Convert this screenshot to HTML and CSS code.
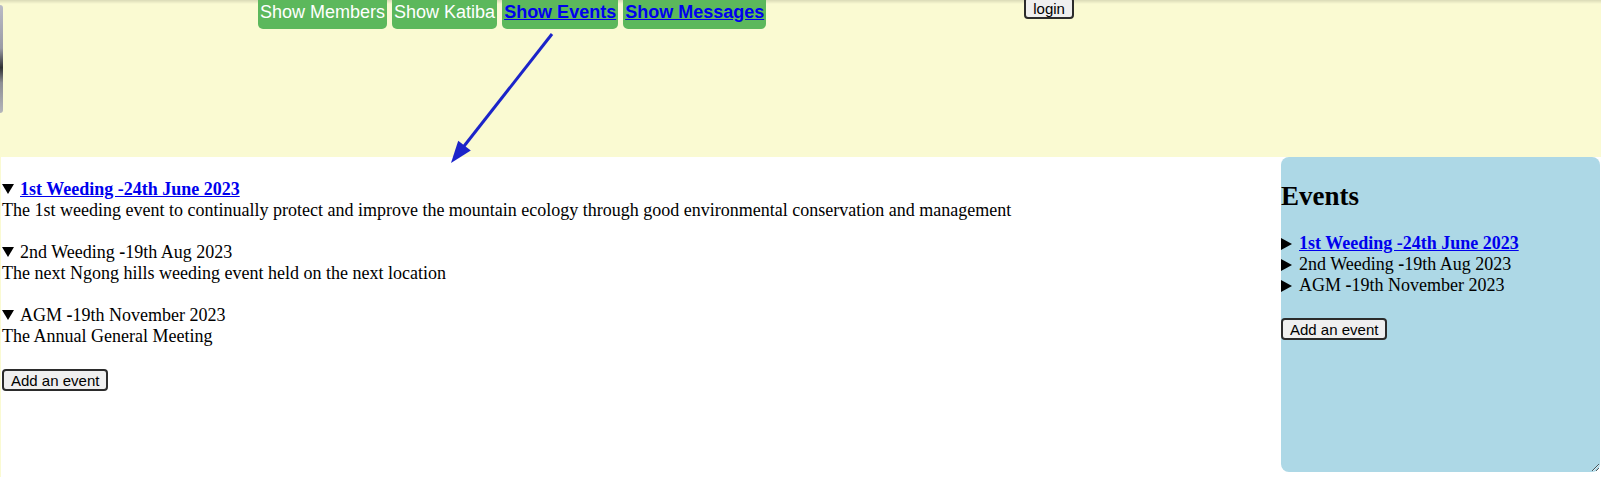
FILE: index.html
```html
<!DOCTYPE html>
<html lang="en">
<head>
<meta charset="utf-8">
<title>Events</title>
<link rel="stylesheet" href="styles.css">
</head>
<body>
<div class="page">
  <header class="topbar">
    <div class="logo-edge"></div>
    <nav class="tabs">
      <span class="tab">Show Members</span>
      <span class="tab">Show Katiba</span>
      <a class="tab tab-link" href="#">Show Events</a>
      <a class="tab tab-link" href="#">Show Messages</a>
    </nav>
    <button class="btn login">login</button>
  </header>

  <main class="content">
    <section class="event-list">
      <details class="event" open>
        <summary><a href="#" class="event-link">1st Weeding -24th June 2023</a></summary>
        <p class="event-desc">The 1st weeding event to continually protect and improve the mountain ecology through good environmental conservation and management</p>
      </details>
      <details class="event" open>
        <summary>2nd Weeding <b>-</b>19th Aug 2023</summary>
        <p class="event-desc">The next Ngong hills weeding event held on the next location</p>
      </details>
      <details class="event" open>
        <summary>AGM <b>-</b>19th November 2023</summary>
        <p class="event-desc">The Annual General Meeting</p>
      </details>
      <button class="btn add-btn">Add an event</button>
    </section>

    <aside class="side-panel">
      <h2 class="side-title">Events</h2>
      <details class="side-event">
        <summary><a href="#" class="event-link">1st Weeding -24th June 2023</a></summary>
      </details>
      <details class="side-event">
        <summary>2nd Weeding <b>-</b>19th Aug 2023</summary>
      </details>
      <details class="side-event">
        <summary>AGM <b>-</b>19th November 2023</summary>
      </details>
      <button class="btn side-add">Add an event</button>
    </aside>
  </main>

  <svg class="arrow" width="140" height="150" viewBox="0 0 140 150">
    <line x1="112" y1="4" x2="21" y2="120" stroke="#1b24c9" stroke-width="3"/>
    <polygon points="11,133 18.2,110.8 30.8,120.6" fill="#1b24c9"/>
  </svg>
</div>
</body>
</html>
```

FILE: styles.css
```css
html, body {
  margin: 0;
  padding: 0;
}

body {
  background: #fafad2;
  font-family: "Liberation Serif", "Times New Roman", serif;
  font-size: 18px;
  line-height: 21px;
  color: #000;
}

.page {
  position: relative;
  width: 1601px;
  height: 477px;
  overflow: hidden;
}

.topbar {
  height: 157px;
  display: flex;
  align-items: flex-start;
  background: linear-gradient(to bottom, rgba(0,0,0,0.13) 0px, rgba(0,0,0,0) 4px), #fafad2;
}

.logo-edge {
  width: 3px;
  height: 108px;
  margin-top: 5px;
  border-radius: 0 3px 3px 0;
  background: linear-gradient(to bottom, #b9bac6 0%, #9a9ba6 40%, #2f3033 58%, #8d8e94 72%, #b4b5bb 100%);
}

.tabs {
  display: flex;
  gap: 5px;
  margin-left: 255px;
}

.tab {
  display: block;
  background: #5cb85c;
  color: #fff;
  font-family: "Liberation Sans", Arial, sans-serif;
  font-size: 18px;
  line-height: 21px;
  padding: 2px 2px 6px;
  border-radius: 0 0 5px 5px;
}

.tab-link {
  color: #0000ee;
  font-weight: bold;
  text-decoration: underline;
}

.btn {
  font-family: "Liberation Sans", Arial, sans-serif;
  font-size: 15px;
  line-height: 17px;
  color: #000;
  background: #efefef;
  border: 2px solid #2b2b2b;
  border-radius: 4px;
  padding: 1px 7px 0;
}

.login {
  margin-top: -3px;
  margin-left: 258px;
}

.content {
  display: flex;
  align-items: flex-start;
  height: 320px;
  margin-left: 1px;
  background: #fff;
}

.event-list {
  flex: 1;
  padding: 22px 0 0 1px;
}

.event {
  margin-bottom: 21px;
}

summary {
  list-style: none;
  display: block;
}

summary::-webkit-details-marker {
  display: none;
}

.event summary::before {
  content: "";
  display: inline-block;
  width: 0;
  height: 0;
  border-left: 6px solid transparent;
  border-right: 6px solid transparent;
  border-top: 10px solid #000;
  margin-right: 6px;
  vertical-align: 1px;
}

.side-event summary::before {
  content: "";
  display: inline-block;
  width: 0;
  height: 0;
  border-top: 6px solid transparent;
  border-bottom: 6px solid transparent;
  border-left: 11px solid #000;
  margin-right: 7px;
  vertical-align: -1px;
}

.event-link {
  color: #0000ee;
  font-weight: bold;
  text-decoration: underline;
}

.event-desc {
  margin: 0;
}

.add-btn {
  margin-top: 1px;
}

.side-panel {
  width: 319px;
  height: 315px;
  background: #add8e6;
  border-radius: 8px;
  resize: both;
  overflow: auto;
  box-sizing: border-box;
  margin-right: 1px;
}

.side-title {
  font-size: 27px;
  line-height: 31px;
  margin: 24px 0 21px;
}

.side-add {
  margin-top: 22px;
}

.arrow {
  position: absolute;
  left: 440px;
  top: 30px;
  pointer-events: none;
}
```
